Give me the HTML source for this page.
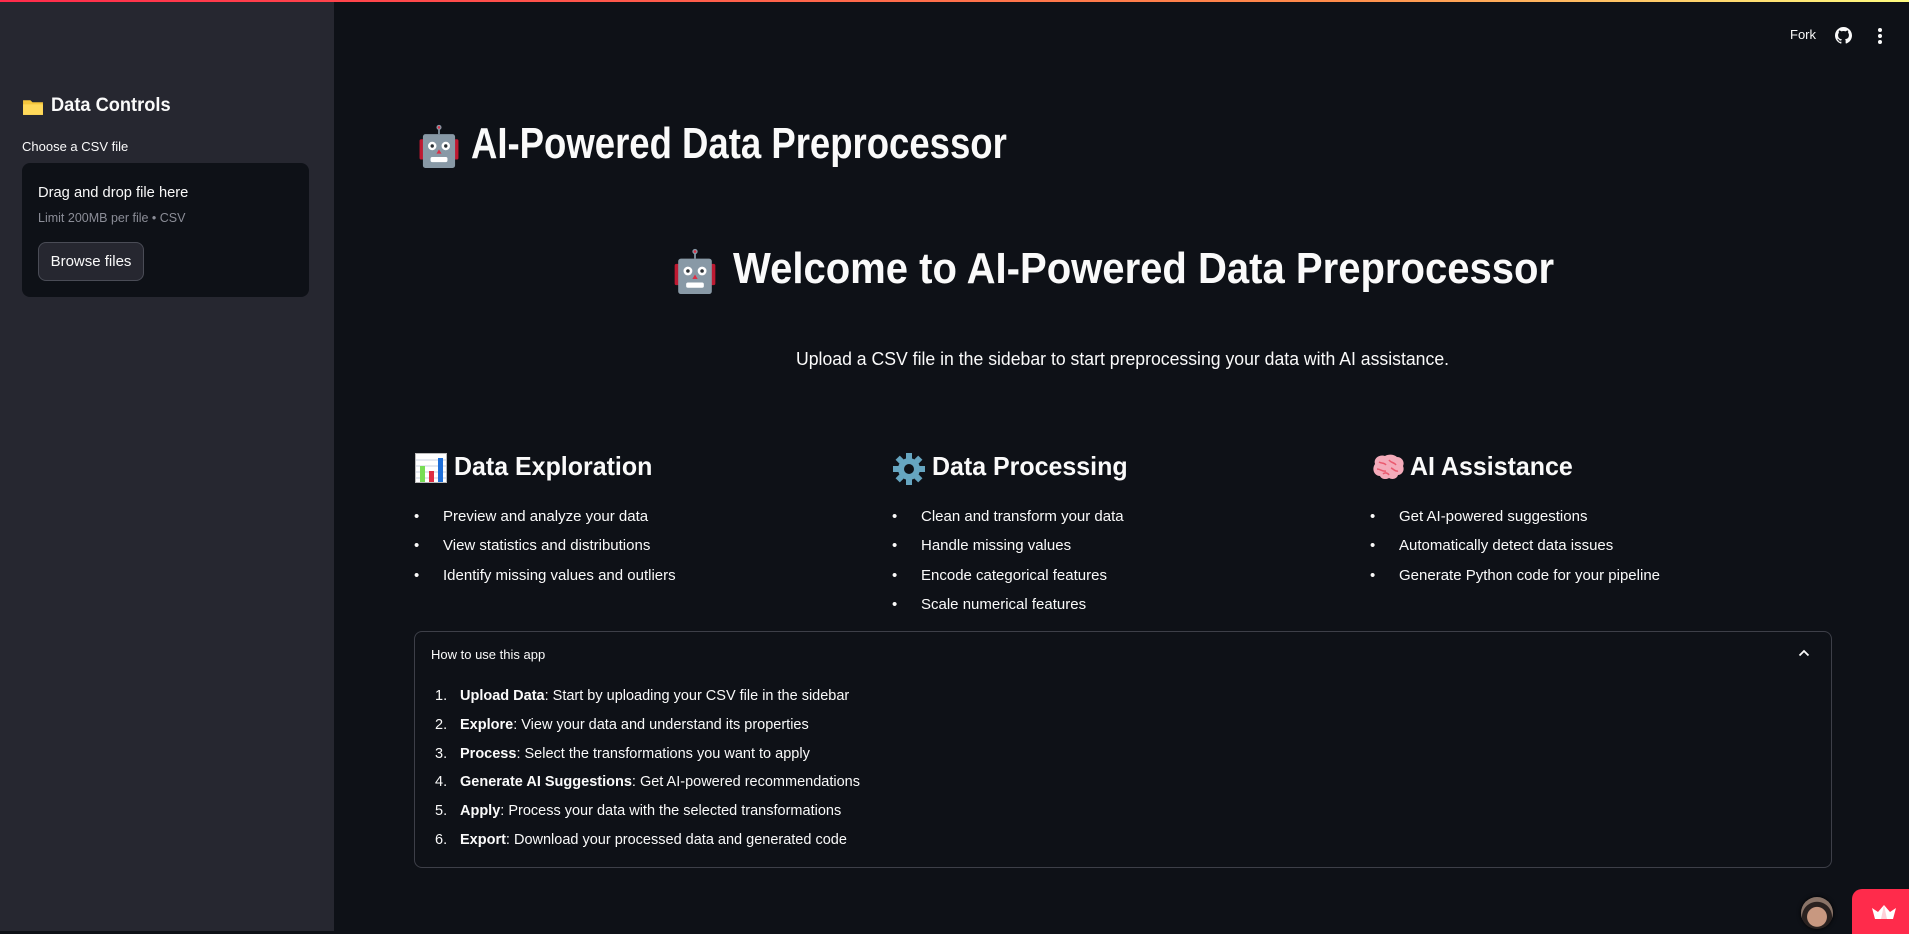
<!DOCTYPE html>
<html><head><meta charset="utf-8">
<style>
*{margin:0;padding:0;box-sizing:border-box}
body{width:1909px;height:931px;overflow:hidden;background:#0e1117;color:#fafafa;font-family:"Liberation Sans",sans-serif;position:relative}
.topbar{position:absolute;left:0;top:0;width:1909px;height:2px;background:linear-gradient(90deg,#ff2b4b,#ff8c4b 70%,#fffd80)}
.side{position:absolute;left:0;top:2px;width:334px;height:929px;background:#262730}
.abs{position:absolute;white-space:nowrap}
.sx{display:inline-block;transform-origin:0 50%;white-space:nowrap}
.bl span{position:absolute;left:29px;white-space:nowrap}
</style></head><body>
<div class="topbar"></div>
<div class="side">
  <div class="abs" style="left:22px;top:93px;font-size:19px;font-weight:bold;display:flex;align-items:center;gap:7px">
    <svg width="22" height="19" viewBox="0 0 21 18"><path d="M1 3h7l2 2h10v12H1z" fill="#f5c63c"/><path d="M1 7h19v10H1z" fill="#ffd95a"/></svg>
    <span class="sx" style="transform:scaleX(.96)">Data Controls</span></div>
  <div class="abs" style="left:22px;top:137px;font-size:13px">Choose a CSV file</div>
  <div class="abs" style="left:22px;top:161px;width:287px;height:134px;background:#0e1117;border-radius:8px"></div>
  <div class="abs" style="left:38px;top:182px;font-size:15px"><span class="sx" style="transform:scaleX(.98)">Drag and drop file here</span></div>
  <div class="abs" style="left:38px;top:209px;font-size:12.5px;color:#8b8d97">Limit 200MB per file • CSV</div>
  <div class="abs" style="left:38px;top:240px;width:106px;height:39px;background:#262730;border:1px solid #4a4c56;border-radius:8px;font-size:15px;line-height:37px;text-align:center">Browse files</div>
</div>

<div class="abs" style="left:1790px;top:27px;font-size:13px">Fork</div>
<svg class="abs" style="left:1835px;top:27px" width="17" height="17" viewBox="0 0 16 16"><path fill="#fafafa" d="M8 0C3.6 0 0 3.6 0 8c0 3.5 2.3 6.5 5.5 7.6.4.1.5-.2.5-.4v-1.4c-2.2.5-2.7-1-2.7-1-.4-.9-.9-1.200-.9-1.2-.7-.5.1-.5.1-.5.8.1 1.2.8 1.2.8.7 1.2 1.9.9 2.3.7.1-.5.3-.9.5-1.1-1.8-.2-3.6-.9-3.6-4 0-.9.3-1.6.8-2.1-.1-.2-.4-1 .1-2.1 0 0 .7-.2 2.2.8.6-.2 1.3-.3 2-.3s1.4.1 2 .3c1.5-1 2.2-.8 2.2-.8.4 1.1.2 1.9.1 2.1.5.6.8 1.3.8 2.1 0 3.1-1.9 3.7-3.6 3.9.3.3.5.8.5 1.5v2.2c0 .2.1.5.6.4C13.7 14.5 16 11.5 16 8c0-4.4-3.6-8-8-8z"/></svg>
<div class="abs" style="left:1878px;top:28px;width:4px;height:16px">
  <div style="width:4px;height:4px;border-radius:2px;background:#fafafa;margin-bottom:2px"></div>
  <div style="width:4px;height:4px;border-radius:2px;background:#fafafa;margin-bottom:2px"></div>
  <div style="width:4px;height:4px;border-radius:2px;background:#fafafa"></div></div>

<svg width="0" height="0" style="position:absolute"><defs>
<symbol id="robot" viewBox="0 0 48 52"><line x1="24" y1="4" x2="24" y2="12" stroke="#8899a6" stroke-width="2"/><circle cx="24" cy="4" r="3" fill="#8899a6"/><circle cx="24" cy="4" r="1.5" fill="#dd2e44"/><rect x="1" y="18" width="6" height="24" rx="2" fill="#be1931"/><rect x="41" y="18" width="6" height="24" rx="2" fill="#be1931"/><rect x="5" y="12" width="38" height="40" rx="3" fill="#8899a6"/><circle cx="16" cy="26" r="5" fill="#fff"/><circle cx="32" cy="26" r="5" fill="#fff"/><circle cx="16" cy="26" r="2" fill="#292f33"/><circle cx="32" cy="26" r="2" fill="#292f33"/><path d="M24 30l-3 5h6z" fill="#dd2e44"/><rect x="14" y="39" width="20" height="6" rx="2" fill="#fff"/></symbol>
</defs></svg>

<svg class="abs" style="left:416px;top:124px" width="46" height="44"><use href="#robot"/></svg>
<div class="abs" style="left:471px;top:117px;font-size:44px;font-weight:bold;line-height:54px"><span class="sx" style="transform:scaleX(.83)">AI-Powered Data Preprocessor</span></div>

<svg class="abs" style="left:671px;top:248px" width="48" height="46"><use href="#robot"/></svg>
<div class="abs" style="left:733px;top:242px;font-size:44px;font-weight:bold;line-height:54px"><span class="sx" style="transform:scaleX(.91)">Welcome to AI-Powered Data Preprocessor</span></div>

<div class="abs" style="left:796px;top:349px;font-size:18px"><span class="sx" style="transform:scaleX(.98)">Upload a CSV file in the sidebar to start preprocessing your data with AI assistance.</span></div>

<svg class="abs" style="left:415px;top:453px" width="32" height="30" viewBox="0 0 32 30"><rect x="0.5" y="0.5" width="31" height="29" fill="#fff" stroke="#bbb"/><g stroke="#c8d0e0"><line x1="1" y1="7" x2="31" y2="7"/><line x1="1" y1="13" x2="31" y2="13"/><line x1="1" y1="19" x2="31" y2="19"/><line x1="1" y1="25" x2="31" y2="25"/></g><rect x="5" y="13" width="5" height="16" fill="#77dd55"/><rect x="14" y="18" width="5" height="11" fill="#dd2e44"/><rect x="23" y="5" width="5" height="24" fill="#1e6fd9"/></svg>
<div class="abs" style="left:454px;top:451px;font-size:26px;font-weight:bold"><span class="sx" style="transform:scaleX(.96)">Data Exploration</span></div>

<svg class="abs" style="left:893px;top:453px" width="32" height="32" viewBox="0 0 32 32"><g fill="#66a5c0"><circle cx="16" cy="16" r="11"/><rect x="13" y="0" width="6" height="32"/><rect x="0" y="13" width="32" height="6"/><rect x="13" y="0" width="6" height="32" transform="rotate(45 16 16)"/><rect x="13" y="0" width="6" height="32" transform="rotate(-45 16 16)"/></g><circle cx="16" cy="16" r="5" fill="#0e1117"/></svg>
<div class="abs" style="left:932px;top:451px;font-size:26px;font-weight:bold"><span class="sx" style="transform:scaleX(.96)">Data Processing</span></div>

<svg class="abs" style="left:1371px;top:454px" width="33" height="28" viewBox="0 0 33 28"><path d="M4 10C2 4 9 0 14 2c3-2 9-2 12 1 5 0 8 5 6 9 2 4-1 9-5 9-1 4-6 5-9 3-3 2-8 1-9-2C4 22 0 16 4 10z" fill="#f4abba"/><path d="M8 8c3 2 5 0 7 3M18 6c2 3 5 2 7 5M6 15c4 0 5 3 9 2M20 14c3 1 4 4 7 3M12 20c2-2 5-1 6 1" stroke="#ea596e" stroke-width="1.5" fill="none"/></svg>
<div class="abs" style="left:1410px;top:451px;font-size:26px;font-weight:bold"><span class="sx" style="transform:scaleX(.96)">AI Assistance</span></div>

<div class="bl" style="position:absolute;left:414px;top:502px;font-size:15px;line-height:29.3px">
  <div>• <span>Preview and analyze your data</span></div>
  <div>• <span>View statistics and distributions</span></div>
  <div>• <span>Identify missing values and outliers</span></div>
</div>
<div class="bl" style="position:absolute;left:892px;top:502px;font-size:15px;line-height:29.3px">
  <div>• <span>Clean and transform your data</span></div>
  <div>• <span>Handle missing values</span></div>
  <div>• <span>Encode categorical features</span></div>
  <div>• <span>Scale numerical features</span></div>
</div>
<div class="bl" style="position:absolute;left:1370px;top:502px;font-size:15px;line-height:29.3px">
  <div>• <span>Get AI-powered suggestions</span></div>
  <div>• <span>Automatically detect data issues</span></div>
  <div>• <span>Generate Python code for your pipeline</span></div>
</div>

<div class="abs" style="left:414px;top:631px;width:1418px;height:237px;border:1px solid #3d3f48;border-radius:8px"></div>
<div class="abs" style="left:431px;top:647px;font-size:13px">How to use this app</div>
<svg class="abs" style="left:1798px;top:649px" width="12" height="8" viewBox="0 0 12 8"><path d="M1.5 6.5L6 2l4.5 4.5" stroke="#fafafa" stroke-width="1.8" fill="none"/></svg>
<div style="position:absolute;left:435px;top:682px;font-size:14.5px;line-height:28.8px">
  <div>1.<span style="position:absolute;left:25px;white-space:nowrap"><b>Upload Data</b>: Start by uploading your CSV file in the sidebar</span></div>
  <div>2.<span style="position:absolute;left:25px;white-space:nowrap"><b>Explore</b>: View your data and understand its properties</span></div>
  <div>3.<span style="position:absolute;left:25px;white-space:nowrap"><b>Process</b>: Select the transformations you want to apply</span></div>
  <div>4.<span style="position:absolute;left:25px;white-space:nowrap"><b>Generate AI Suggestions</b>: Get AI-powered recommendations</span></div>
  <div>5.<span style="position:absolute;left:25px;white-space:nowrap"><b>Apply</b>: Process your data with the selected transformations</span></div>
  <div>6.<span style="position:absolute;left:25px;white-space:nowrap"><b>Export</b>: Download your processed data and generated code</span></div>
</div>

<div class="abs" style="left:1801px;top:897px;width:32px;height:32px;border-radius:50%;background:radial-gradient(circle at 50% 62%,#c89880 0 38%,#2a2220 40% 58%,#8a7468 60%);box-shadow:0 0 4px #000"></div>
<div class="abs" style="left:1852px;top:889px;width:60px;height:45px;background:#ff2b4b;border-radius:10px 0 0 0"></div>
<svg class="abs" style="left:1871px;top:904px" width="26" height="16" viewBox="0 0 26 16"><path d="M1 4l6 4 6-7 6 7 6-4-3 11H4z" fill="#fff"/><path d="M13 1l-3 14h6z" fill="#ffd0d8"/></svg>
</body></html>
